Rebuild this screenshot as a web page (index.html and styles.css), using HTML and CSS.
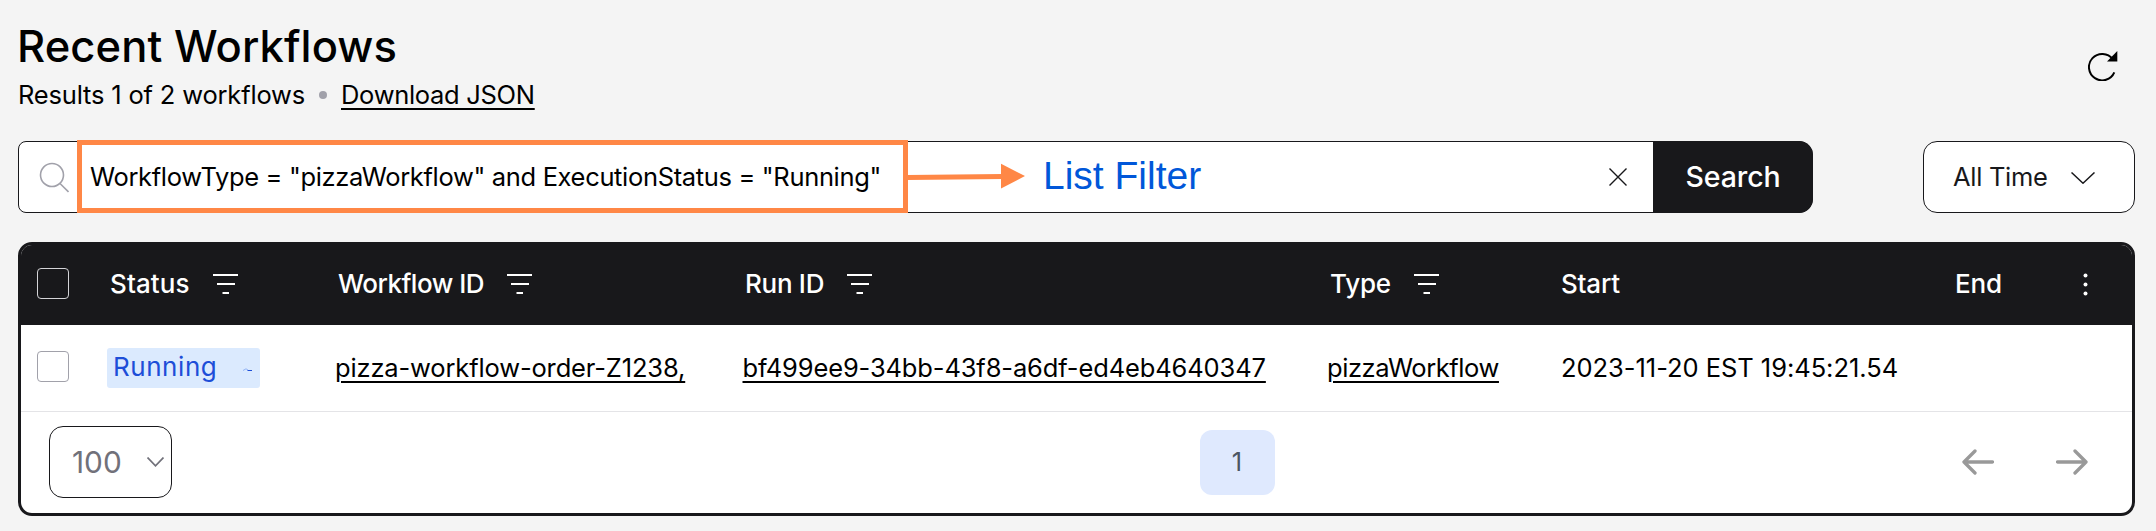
FILE: index.html
```html
<!DOCTYPE html>
<html lang="en">
<head>
<meta charset="utf-8">
<title>Recent Workflows</title>
<link rel="stylesheet" href="styles.css">
</head>
<body>
<svg class="sprite" aria-hidden="true">
  <symbol id="filter" viewBox="0 0 25 22"><path d="M0 2h25M4 11h18M9.500 20h6.500" fill="none" stroke="currentColor" stroke-width="1.800"/></symbol>
</svg>
<main class="page">
  <header class="top">
    <div>
      <h1 class="title">Recent Workflows</h1>
      <p class="summary"><span class="results">Results 1 of 2 workflows</span><i class="dot"></i><a class="link download">Download JSON</a></p>
    </div>
    <svg class="refresh" viewBox="0 0 30 30"><path d="M24.700 8.200A13.200 13.200 0 1 0 26.300 21.300" fill="none" stroke="#000" stroke-width="2"/><path d="M29.300 0v10.500H19z"/></svg>
  </header>

  <section class="controls">
    <div class="search">
      <svg class="glass" viewBox="0 0 30 32"><g fill="none" stroke="#a1a1aa" stroke-width="1.600"><circle cx="13" cy="13" r="11.500"/><path d="M21 21.500l8.500 8.500"/></g></svg>
      <span class="query">WorkflowType = "pizzaWorkflow" and ExecutionStatus = "Running"</span>
      <svg class="clear" viewBox="0 0 18 18"><path d="M.5.500l17 17M17.500.500l-17 17" stroke="#18181b" stroke-width="1.400"/></svg>
      <button class="submit">Search</button>
      <div class="highlight"></div>
      <svg class="arrow" viewBox="0 0 118 26"><path d="M0 14.500L96 13.500" stroke="#ff8746" stroke-width="4.800"/><path d="M94 .800v24.700l24-12.500z" fill="#ff8746"/></svg>
      <span class="note">List Filter</span>
    </div>
    <div class="time"><span>All Time</span><svg class="time-chevron" viewBox="0 0 24 12"><path d="M.5.500L12 11.200 23.500.500" fill="none" stroke="#18181b" stroke-width="1.500"/></svg></div>
  </section>

  <section class="table">
    <div class="row head">
      <span class="check"></span>
      <span class="th status">Status<svg class="filter"><use href="#filter"/></svg></span>
      <span class="th wid">Workflow ID<svg class="filter"><use href="#filter"/></svg></span>
      <span class="th run">Run ID<svg class="filter"><use href="#filter"/></svg></span>
      <span class="th type">Type<svg class="filter"><use href="#filter"/></svg></span>
      <span class="th start">Start</span>
      <span class="th end">End</span>
      <svg class="kebab" viewBox="0 0 5 23"><g fill="#fff"><circle cx="2.500" cy="2.500" r="2"/><circle cx="2.500" cy="11.500" r="2"/><circle cx="2.500" cy="20.500" r="2"/></g></svg>
    </div>
    <div class="row body">
      <span class="check"></span>
      <span class="badge">Running<svg class="pulse" viewBox="0 0 10 4"><path d="M0 2.500L3 .800 5 2" fill="none" stroke="#93b4f5"/><path d="M4.500 2.500H9" stroke="#1d4ed8" stroke-width="1.200"/></svg></span>
      <a class="link cell-id">pizza-workflow-order-Z1238,</a>
      <a class="link cell-run">bf499ee9-34bb-43f8-a6df-ed4eb4640347</a>
      <a class="link cell-type">pizzaWorkflow</a>
      <span class="cell-start">2023-11-20 EST 19:45:21.54</span>
    </div>
    <footer class="pager">
      <div class="size"><span>100</span><svg class="size-chevron" viewBox="0 0 17 10"><path d="M.5.500l8 8.300 8-8.300" fill="none" stroke="#71717a" stroke-width="1.700"/></svg></div>
      <span class="current">1</span>
      <div class="nav">
        <svg class="nav-arrow" viewBox="0 0 32 26"><path d="M30.500 13H2M13 2L2 13l11 11" fill="none" stroke="#999" stroke-width="3.300" stroke-linecap="round" stroke-linejoin="round"/></svg>
        <svg class="nav-arrow" viewBox="0 0 32 26"><path d="M1.500 13H30M19 2l11 11-11 11" fill="none" stroke="#999" stroke-width="3.300" stroke-linecap="round" stroke-linejoin="round"/></svg>
      </div>
    </footer>
  </section>
</main>
</body>
</html>
```
FILE: styles.css
```css
* { box-sizing: border-box; }
body {
  margin: 0;
  background: #f4f4f4;
  color: #000;
  font: 25.5px/36px Inter, "Open Sans", sans-serif;
}
svg { display: block; flex: none; }
.sprite { width: 0; height: 0; position: absolute; }
.page { padding: 19px 21px 15px 18px; height: 531px; white-space: nowrap; }

.top { display: flex; justify-content: space-between; height: 122px; }
.title { margin: 0 0 4px -1px; font-size: 43.5px; line-height: 54px; font-weight: 450; letter-spacing: 0.1px; }
.summary { display: flex; align-items: center; margin: 0; }
.results { width: 287px; letter-spacing: -0.18px; }
.dot { width: 8px; height: 8px; margin: 0 14px 0 14px; border-radius: 50%; background: #a1a1aa; }
.refresh { width: 30px; height: 30px; margin: 32px 17px 0 0; }

.link {
  text-decoration: underline;
  text-decoration-thickness: 2px;
  text-underline-offset: 4px;
}
.download { letter-spacing: -0.3px; }

.controls { display: flex; justify-content: space-between; height: 72px; }
.search {
  position: relative;
  display: flex;
  align-items: center;
  width: 1795px;
  padding-left: 20px;
  border: 1px solid #18181b;
  border-radius: 8px 14px 14px 8px;
  background: #fff;
}
.glass { width: 30px; height: 32px; margin-top: 2px; }
.query { flex: 1; margin-left: 21px; letter-spacing: -0.34px; }
.clear { width: 18px; height: 18px; margin-right: 26px; }
.submit {
  width: 160px;
  height: 72px;
  margin-right: -1px;
  padding: 0;
  border: 0;
  border-radius: 0 14px 14px 0;
  background: #18181b;
  color: #fff;
  font: 500 28.5px/36px Inter, sans-serif;
  letter-spacing: -0.1px;
}
.highlight {
  position: absolute;
  left: 58px;
  top: -2px;
  width: 831px;
  height: 73px;
  border: 5px solid #ff8746;
}
.arrow { position: absolute; left: 888px; top: 21px; width: 118px; height: 26px; }
.note {
  position: absolute;
  left: 1024px;
  top: 12px;
  color: #0057d9;
  font: 39px/44px "Liberation Sans", sans-serif;
}
.time {
  display: flex;
  align-items: center;
  justify-content: space-between;
  width: 212px;
  padding: 0 39px 0 29px;
  border: 1px solid #18181b;
  border-radius: 14px;
  background: #fff;
  color: #18181b;
  letter-spacing: -0.3px;
}
.time-chevron { width: 24px; height: 12px; margin-top: 2px; }

.table {
  width: 2117px;
  height: 274px;
  margin-top: 29px;
  overflow: hidden;
  border: 3px solid #18181b;
  border-radius: 14px;
  background: #fff;
}
.row {
  display: grid;
  grid-template-columns: 70px 228px 407px 584px 234px 394px 129px 5px;
  align-items: center;
  padding-left: 16px;
}
.head { height: 80px; padding-bottom: 2px; background: #18181b; color: #fff; }
.body { height: 87px; border-bottom: 1px solid #e4e4e7; }
.check { width: 32px; height: 31px; border: 1px solid #a1a1aa; border-radius: 4px; }
.head .check { margin-bottom: 2px; border-color: #d4d4d8; }
.body .check { margin-bottom: 3px; }
.th { display: flex; align-items: center; font-size: 26px; font-weight: 500; }
.filter { width: 25px; height: 22px; margin-left: 23px; }
.status { padding-left: 3px; letter-spacing: 0.1px; }
.wid { padding-left: 3px; letter-spacing: -0.5px; }
.run { padding-left: 3px; letter-spacing: -0.3px; }
.type { padding-left: 4px; letter-spacing: -0.2px; }
.start { padding-left: 1px; letter-spacing: -0.2px; }
.end { padding-left: 1px; letter-spacing: -0.2px; }
.kebab { width: 5px; height: 23px; }
.badge {
  display: flex;
  align-items: center;
  width: 153px;
  height: 40px;
  padding: 0 7px 2px 6px;
  justify-content: space-between;
  border-radius: 3px;
  background: #dbeafe;
  color: #1d4ed8;
  font-size: 26px;
  letter-spacing: 0.55px;
}
.pulse { width: 10px; height: 4px; margin-top: 6px; }
.cell-id { letter-spacing: -0.15px; }
.cell-run { padding-left: 0.5px; letter-spacing: -0.13px; }
.cell-type { padding-left: 1px; letter-spacing: -0.42px; }
.cell-start { padding-left: 1px; letter-spacing: -0.04px; }

.pager {
  display: flex;
  align-items: center;
  justify-content: space-between;
  height: 100px;
  padding: 0 44px 0 28px;
}
.size {
  display: flex;
  align-items: center;
  justify-content: space-between;
  width: 123px;
  height: 72px;
  padding: 0 7px 0 22px;
  border: 1px solid #18181b;
  border-radius: 14px;
  color: #71717a;
  font-size: 29.8px;
}
.size-chevron { width: 17px; height: 10px; }
.current {
  width: 75px;
  height: 65px;
  margin-left: 340px;
  border-radius: 12px;
  background: #dfe9fe;
  color: #4b5563;
  font-size: 25.5px;
  line-height: 64px;
  text-align: center;
}
.nav { display: flex; gap: 62px; }
.nav-arrow { width: 32px; height: 26px; }
```
